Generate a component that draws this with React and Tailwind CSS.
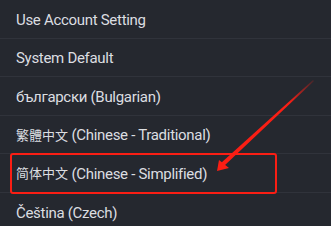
import React from "react";

const languages = [
  { label: "Use Account Setting" },
  { label: "System Default" },
  { label: "български (Bulgarian)" },
  { cjk: "繁體中文", label: " (Chinese - Traditional)" },
  { cjk: "简体中文", label: " (Chinese - Simplified)" },
  { label: "Čeština (Czech)" },
];

const App = () => {
  return (
    <div
      className="relative w-[331px] h-[226px] overflow-hidden bg-[#25282f]"
      style={{ fontFamily: 'Roboto, "Noto Sans CJK SC", sans-serif' }}
    >
      {languages.map((lang, i) => (
        <div
          key={i}
          className="h-[38.6px] flex items-center pl-4 pt-[2px] border-b border-[#30333b] text-[15px] tracking-[-0.3px] text-[#dcdee1] whitespace-pre"
        >
          {lang.cjk && <span className="text-[13px] tracking-normal">{lang.cjk}</span>}
          {lang.label}
        </div>
      ))}

      {/* annotation: highlight box */}
      <div className="absolute left-[10px] top-[153px] w-[267px] h-[41px] border-[2.5px] border-[#fa1e14] rounded-[3px]" />

      {/* annotation: arrow */}
      <svg className="absolute left-0 top-0" width="331" height="226">
        <defs>
          <linearGradient id="fade" x1="313" y1="80" x2="217" y2="171" gradientUnits="userSpaceOnUse">
            <stop offset="0" stopColor="#fa1e14" stopOpacity="0.15" />
            <stop offset="0.25" stopColor="#fa1e14" />
            <stop offset="1" stopColor="#fa1e14" />
          </linearGradient>
        </defs>
        <polygon points="313,80 314,81 224,166 221,163" fill="url(#fade)" />
        <polygon points="217,171 219,160 229,168" fill="#fa1e14" />
      </svg>
    </div>
  );
};

export default App;
